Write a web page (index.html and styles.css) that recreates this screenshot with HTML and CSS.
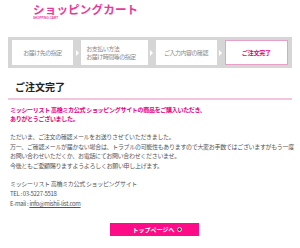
FILE: index.html
```html
<!DOCTYPE html>
<html lang="ja">

<head>
    <meta charset="utf-8">
    <title>ショッピングカート - ご注文完了</title>
    <link rel="stylesheet" href="styles.css">
</head>

<body>
    <div id="page">
        <div class="logo">
            <div class="logo-title">ショッピングカート</div>
            <div class="logo-sub">SHOPPING CART</div>
        </div>

        <div class="steps">
            <div class="step">お届け先の指定</div>
            <div class="arrow"></div>
            <div class="step step-left">お支払い方法<br>お届け時間等の指定</div>
            <div class="arrow"></div>
            <div class="step">ご入力内容の確認</div>
            <div class="arrow"></div>
            <div class="step current">ご注文完了</div>
        </div>

        <h2 class="title">ご注文完了</h2>

        <p class="thanks">
            ミッシーリスト 高橋ミカ公式 ショッピングサイトの商品をご購入いただき、<br>
            ありがとうございました。
        </p>

        <p class="message">
            ただいま、ご注文の確認メールをお送りさせていただきました。<br>
            万一、ご確認メールが届かない場合は、トラブルの可能性もありますので大変お手数ではございますがもう一度<br>
            お問い合わせいただくか、お電話にてお問い合わせくださいませ。<br>
            今後ともご愛顧賜りますようよろしくお願い申し上げます。
        </p>

        <p class="message">
            ミッシーリスト 高橋ミカ公式 ショッピングサイト<br>
            TEL : 03-5227-5518<br>
            E-mail : <a href="#">info@mishii-list.com</a>
        </p>

        <div class="actions">
            <a class="top-button" href="#">トップページへ <span class="circle"></span></a>
        </div>
    </div>
</body>

</html>
```

FILE: styles.css
```css
 html {
     font-family: "Noto Sans CJK JP", "Noto Sans", sans-serif;
     background: white;
 }

 body {
     margin: 0;
 }

 #page {
     padding: 0 8px;
     color: #555;
 }

 /* logo */

 .logo {
     padding: 4px 0 0 25px;
     height: 37px;
     box-sizing: border-box;
 }

 .logo-title {
     color: #e8399a;
     font-size: 11.5px;
     font-weight: bold;
     line-height: 11px;
     letter-spacing: 0.2px;
 }

 .logo-sub {
     color: #e8399a;
     font-family: "Liberation Sans", sans-serif;
     font-size: 6px;
     font-weight: bold;
     line-height: 6px;
     margin-top: 1px;
     white-space: nowrap;
     transform: scale(0.5);
     transform-origin: left top;
 }

 /* steps */

 .steps {
     display: flex;
     align-items: stretch;
     background: #d6d6d6;
     padding: 3px 4px;
     height: 31px;
     box-sizing: border-box;
 }

 .step {
     flex: 1;
     background: white;
     font-size: 6px;
     letter-spacing: -0.5px;
     line-height: 8px;
     color: #888;
     display: flex;
     align-items: center;
     justify-content: center;
 }

 .step-left {
     justify-content: flex-start;
     padding-left: 5px;
 }

 .step.current {
     border: 1px solid #e8a0c8;
     color: #e4007f;
     font-weight: bold;
     letter-spacing: -0.2px;
 }

 .arrow {
     width: 8px;
     display: flex;
     align-items: center;
     justify-content: center;
 }

 .arrow::after {
     content: "";
     border-left: 3px solid white;
     border-top: 3px solid transparent;
     border-bottom: 3px solid transparent;
 }

 /* content */

 .title {
     margin: 13px 0 0 0;
     padding: 0 0 5px 7px;
     font-size: 10px;
     line-height: 12px;
     color: #222;
     border-bottom: 2px solid #f2c6dc;
 }

 .thanks {
     margin: 6px 2px 0;
     color: #e4007f;
     font-weight: bold;
     font-size: 6px;
     letter-spacing: -0.3px;
     line-height: 8.5px;
 }

 .message {
     margin: 9px 2px 0;
     font-size: 6px;
     letter-spacing: -0.32px;
     line-height: 9.6px;
     white-space: nowrap;
 }

 .message a {
     color: #555;
 }

 .actions {
     display: flex;
     justify-content: center;
     padding-left: 9px;
     margin-top: 15px;
 }

 .top-button {
     display: flex;
     align-items: center;
     justify-content: center;
     gap: 3px;
     width: 89px;
     height: 13px;
     background: #ff0a87;
     color: white;
     font-weight: bold;
     font-size: 6px;
     text-decoration: none;
     box-sizing: border-box;
     padding-left: 6px;
 }

 .circle {
     width: 5px;
     height: 5px;
     border-radius: 50%;
     background: #444;
     border: 1px solid #ddd;
     box-sizing: border-box;
 }
```
